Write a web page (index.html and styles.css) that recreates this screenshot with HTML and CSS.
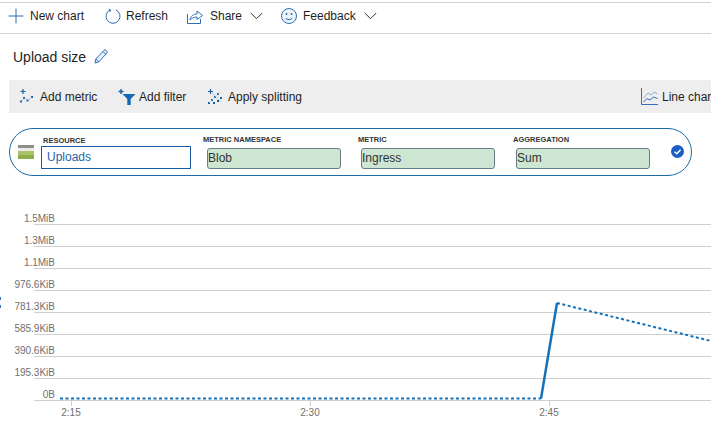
FILE: index.html
```html
<!DOCTYPE html>
<html lang="en">
<head>
<meta charset="utf-8">
<title>Upload size</title>
<link rel="stylesheet" href="styles.css">
</head>
<body>
<div class="page">
  <div class="cmdbar">
    <button class="cmd cmd-new"><svg width="16" height="16" viewBox="0 0 16 16" class="ic"><path d="M8 .5v15M.5 8h15" stroke="#2f6fb5" stroke-width="1" fill="none"/></svg>New chart</button>
    <button class="cmd cmd-refresh"><svg width="16" height="16" viewBox="0 0 16 16" class="ic"><path d="M5.2 1.9A7 7 0 1 0 10.8 1.9" stroke="#2f6fb5" stroke-width="1" fill="none"/><path d="M3.6 1l2.2 1-1 2" stroke="#2f6fb5" stroke-width=".9" fill="none"/></svg>Refresh</button>
    <button class="cmd cmd-share"><svg width="16" height="16" viewBox="0 0 16 16" class="ic"><path d="M.5 6v9.500h13V11" stroke="#2f6fb5" stroke-width="1" fill="none"/><path d="M3 12c.5-4 3.500-6 7-6V3l5.500 4.500L10 11.500V9c-3 0-5 1-7 3z" stroke="#2f6fb5" stroke-width="1" fill="none"/></svg>Share<svg width="13" height="8" viewBox="0 0 13 8" class="chev"><path d="M.8 1l5.700 5.700L12.200 1" stroke="#333" stroke-width="1" fill="none"/></svg></button>
    <button class="cmd cmd-feedback"><svg width="16" height="16" viewBox="0 0 16 16" class="ic"><circle cx="8" cy="8" r="7.500" stroke="#2f6fb5" fill="#eef4fb"/><circle cx="5.500" cy="6" r="1" fill="#2f6fb5"/><circle cx="10.500" cy="6" r="1" fill="#2f6fb5"/><path d="M4.500 10c1.500 2 5.500 2 7 0" stroke="#2f6fb5" fill="none"/></svg>Feedback<svg width="13" height="8" viewBox="0 0 13 8" class="chev"><path d="M.8 1l5.700 5.700L12.200 1" stroke="#333" stroke-width="1" fill="none"/></svg></button>
  </div>

  <div class="title-row">
    <h1 class="title">Upload size</h1>
    <svg width="14" height="15" viewBox="0 0 14 15" class="pencil"><path d="M1 14l.8-4L10 1.300a1.300 1.300 0 0 1 1.900 0l.9.9a1.300 1.300 0 0 1 0 1.900L4.700 13z" stroke="#2f6fb5" fill="#e6f0fa"/><path d="M1.800 10l2.900 3M9 2.500l2.900 2.900" stroke="#2f6fb5" fill="none"/></svg>
  </div>

  <div class="chartbar">
    <button class="act act-metric"><svg width="15" height="15" viewBox="0 0 15 15" class="ic2"><path d="M4 0v5M1.500 2.500h5" stroke="#1b5fa8" stroke-width="1.200"/><g fill="#1b5fa8"><rect x="1" y="11.500" width="2" height="2"/><rect x="4" y="8" width="2" height="2"/><rect x="7.500" y="10.500" width="2" height="2"/><rect x="12" y="7" width="2" height="2"/></g><path d="M2 12.500L5 9l3.500 2.500L13 8" stroke="#7aa5d4" stroke-width=".6" fill="none"/></svg>Add metric</button>
    <button class="act act-filter"><svg width="18" height="16" viewBox="0 0 18 16" class="ic2"><path d="M3 0v5M.5 2.500h5" stroke="#1b5fa8" stroke-width="1.400"/><path d="M4.500 5h13l-4.800 5v6h-3.400v-6z" fill="#1368b8"/></svg>Add filter</button>
    <button class="act act-split"><svg width="16" height="16" viewBox="0 0 16 16" class="ic2"><path d="M3.500 0v5M1 2.500h5" stroke="#1b5fa8" stroke-width="1.200"/><g fill="#1b5fa8"><rect x="1" y="13" width="2" height="2"/><rect x="4" y="10" width="2" height="2"/><rect x="7" y="7" width="2" height="2"/><rect x="10" y="4" width="2" height="2"/><rect x="13" y="8" width="2" height="2"/><rect x="10" y="11" width="2" height="2"/><rect x="6" y="13" width="2" height="2"/></g><path d="M5 4l9 9M2 14L13 3" stroke="#8db3da" stroke-width=".6" fill="none"/></svg>Apply splitting</button>
    <button class="act act-line"><svg width="17" height="17" viewBox="0 0 17 17" class="ic2"><path d="M.5 0v16.500H17" stroke="#2f6fb5" fill="none"/><path d="M2.500 10L7 5l3 2 3-3 3.500 2" stroke="#8ab2dc" fill="none"/><path d="M2.500 14l3.500-3.500 3 1.500 3.500-3 4 1.500" stroke="#2f6fb5" fill="none"/></svg>Line chart</button>
  </div>

  <div class="pill">
    <svg width="16" height="14" viewBox="0 0 16 14" class="res-ic"><rect width="16" height="14" fill="#a8c464"/><rect width="16" height="5" fill="#8d8d8d"/><rect y="3" width="16" height="3" fill="#ececec"/><rect y="10" width="16" height="4" fill="#8fae4b"/></svg>
    <div class="field f-res">
      <label class="lbl">RESOURCE</label>
      <div class="input-res">Uploads</div>
    </div>
    <div class="field f-ns">
      <label class="lbl">METRIC NAMESPACE</label>
      <div class="input-ok">Blob</div>
    </div>
    <div class="field f-met">
      <label class="lbl">METRIC</label>
      <div class="input-ok">Ingress</div>
    </div>
    <div class="field f-agg">
      <label class="lbl">AGGREGATION</label>
      <div class="input-ok">Sum</div>
    </div>
    <svg width="13" height="13" viewBox="0 0 13 13" class="check"><circle cx="6.500" cy="6.500" r="6.500" fill="#1c5fc4"/><path d="M3.500 6.800l2.200 2 3.900-4" stroke="#fff" stroke-width="1.500" fill="none"/></svg>
  </div>

  <svg class="chart" width="711" height="227" viewBox="0 200 711 227">
    <g class="grid">
      <path d="M34 224.500H711M34 246.500H711M34 268.500H711M34 290.500H711M34 312.500H711M34 334.500H711M34 356.500H711M34 378.500H711M34 400.500H711"/>
      <path d="M71.500 400v6M310.500 400v6M549.500 400v6"/>
    </g>
    <g class="ylab" text-anchor="end">
      <text x="55" y="222">1.5MiB</text>
      <text x="55" y="244">1.3MiB</text>
      <text x="55" y="266">1.1MiB</text>
      <text x="55" y="288">976.6KiB</text>
      <text x="55" y="310">781.3KiB</text>
      <text x="55" y="332">585.9KiB</text>
      <text x="55" y="354">390.6KiB</text>
      <text x="55" y="376">195.3KiB</text>
      <text x="55" y="398">0B</text>
    </g>
    <g class="xlab" text-anchor="middle">
      <text x="71" y="416">2:15</text>
      <text x="310" y="416">2:30</text>
      <text x="549" y="416">2:45</text>
    </g>
    <path class="dash" d="M60 398.500H541"/>
    <path class="solid" d="M541 398.500L557 303"/>
    <path class="dash" d="M557 303L711 341"/>
    <path class="tick" d="M.5 297v3M.5 305v3"/>
  </svg>
</div>
</body>
</html>
```

FILE: styles.css
```css
* { box-sizing: border-box; }
html, body { margin: 0; padding: 0; background: #fff; }
body { width: 719px; height: 427px; overflow: hidden; font-family: "Liberation Sans", Arial, sans-serif; color: #1f1f1f; }
.page { width: 711px; padding-top: 2px; overflow: hidden; }
button { font: inherit; background: none; border: 0; padding: 0; color: inherit; display: flex; align-items: center; white-space: nowrap; }

.cmdbar { height: 32px; border-top: 1px solid #d2d2d2; border-bottom: 1px solid #d2d2d2; display: flex; align-items: center; padding: 0 0 5px 8px; font-size: 12px; }
.cmd-new { width: 97px; }
.cmd-refresh { width: 82px; }
.cmd-share { width: 94px; }
.ic { margin-right: 6px; flex: none; }
.cmd-refresh .ic { margin-right: 5px; }
.cmd-share .ic { margin-right: 7px; }
.chev { margin-left: 8px; }

.title-row { height: 46px; display: flex; align-items: center; padding: 0 0 1px 13px; }
.title { margin: 0; font-size: 14px; font-weight: 400; color: #1f1f1f; }
.pencil { margin-left: 8px; }

.chartbar { margin-left: 9px; height: 33px; background: #eeeeee; display: flex; align-items: center; padding-left: 10px; font-size: 12px; letter-spacing: .05px; overflow: hidden; }
.act { flex: none; }
.ic2 { margin-right: 6px; flex: none; }
.act-metric { width: 99px; }
.act-filter { width: 89px; }
.act-split { width: 434px; }
.act-filter .ic2 { margin-right: 3px; }
.act-split .ic2 { margin-right: 5px; }
.act-line .ic2 { margin-right: 4px; }

.pill { margin: 15px 0 0 9px; width: 683px; height: 48px; border: 1px solid #1d6aa5; border-radius: 24px; display: flex; align-items: flex-start; padding-left: 8px; }
.res-ic { margin-top: 16px; flex: none; }
.field { display: flex; flex-direction: column; flex: none; }
.lbl { font-size: 7.500px; font-weight: 700; line-height: 9px; color: #333; text-transform: uppercase; }
.f-res { margin-left: 7px; width: 166px; padding-top: 7px; }
.f-res .lbl { padding-left: 2px; }
.input-res { margin-top: 1px; width: 150px; height: 23px; border: 1px solid #1a5a9e; color: #2b62ae; font-size: 12px; line-height: 21px; padding-left: 5px; }
.f-ns { width: 154px; padding-top: 6px; }
.f-met { width: 155px; padding-top: 6px; }
.f-agg { width: 135px; padding-top: 6px; }
.f-ns .lbl { margin-left: -4px; }
.f-met .lbl, .f-agg .lbl { margin-left: -3px; }
.input-ok { margin-top: 4px; width: 134px; height: 21px; background: #cde6d1; border: 1px solid #687d85; border-radius: 3px; color: #333; font-size: 12px; line-height: 19px; }
.check { margin: 16px 0 0 20px; flex: none; }

.chart { display: block; margin-top: 24px; }
.grid path { stroke: #cfcfcf; stroke-width: 1; fill: none; }
.ylab text, .xlab text { font-family: "Liberation Sans", Arial, sans-serif; font-size: 10px; fill: #6f6f6f; }
.dash { stroke: #1571b8; stroke-width: 2; stroke-dasharray: 3 2.500; fill: none; }
.solid { stroke: #1571b8; stroke-width: 2.500; fill: none; }
.tick { stroke: #2f6fb5; stroke-width: 1; fill: none; }
```
